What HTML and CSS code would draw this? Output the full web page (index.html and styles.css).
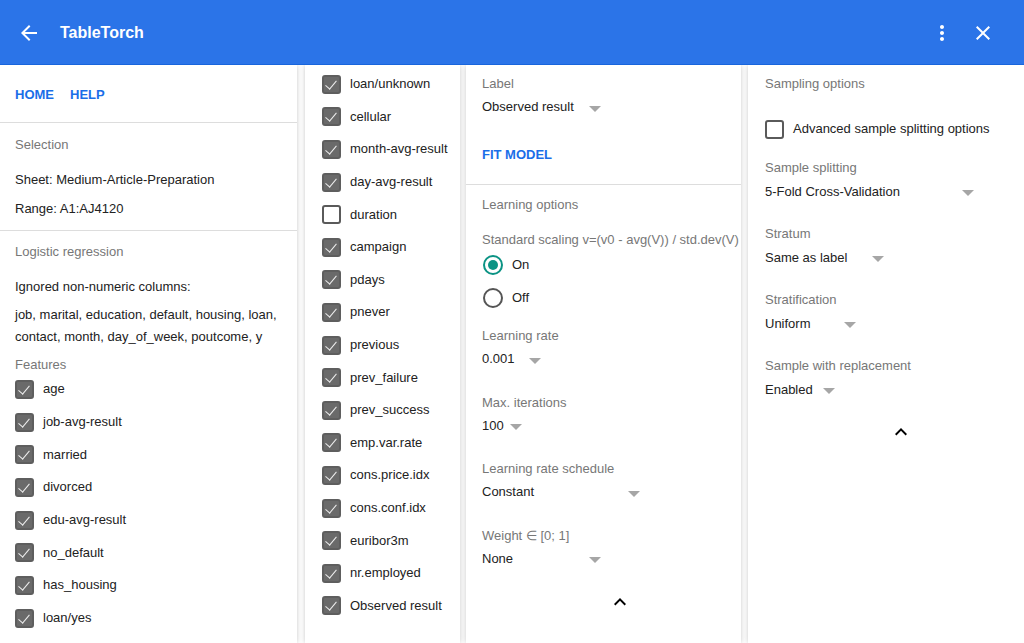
FILE: index.html
```html
<!DOCTYPE html>
<html lang="en">
<head>
<meta charset="utf-8">
<title>TableTorch</title>
<link rel="stylesheet" href="styles.css">
</head>
<body>
<header class="topbar">
  <svg class="icon back" viewBox="0 0 24 24" width="24" height="24"><path fill="#fff" d="M20 11H7.83l5.59-5.59L12 4l-8 8 8 8 1.41-1.41L7.83 13H20v-2z"/></svg>
  <div class="title">TableTorch</div>
  <div class="spacer"></div>
  <svg class="icon more" viewBox="0 0 24 24" width="24" height="24"><path fill="#fff" d="M12 8c1.1 0 2-.9 2-2s-.9-2-2-2-2 .9-2 2 .9 2 2 2zm0 2c-1.1 0-2 .9-2 2s.9 2 2 2 2-.9 2-2-.9-2-2-2zm0 6c-1.1 0-2 .9-2 2s.9 2 2 2 2-.9 2-2-.9-2-2-2z"/></svg>
  <svg class="icon close" viewBox="0 0 24 24" width="24" height="24"><path fill="#fff" d="M19 6.41L17.59 5 12 10.59 6.41 5 5 6.41 10.59 12 5 17.59 6.41 19 12 13.41 17.59 19 19 17.59 13.41 12z"/></svg>
</header>

<main class="columns">
  <section class="col col1">
    <nav class="nav">
      <a class="link">HOME</a>
      <a class="link">HELP</a>
    </nav>
    <div class="block">
      <div class="label">Selection</div>
      <p class="text t1">Sheet: Medium-Article-Preparation</p>
      <p class="text t2">Range: A1:AJ4120</p>
    </div>
    <div class="block last">
      <div class="label">Logistic regression</div>
      <p class="text t1">Ignored non-numeric columns:</p>
      <p class="text multi">job, marital, education, default, housing, loan, contact, month, day_of_week, poutcome, y</p>
      <div class="label features">Features</div>
      <ul class="checks">
        <li class="check on"><span class="box"></span>age</li>
        <li class="check on"><span class="box"></span>job-avg-result</li>
        <li class="check on"><span class="box"></span>married</li>
        <li class="check on"><span class="box"></span>divorced</li>
        <li class="check on"><span class="box"></span>edu-avg-result</li>
        <li class="check on"><span class="box"></span>no_default</li>
        <li class="check on"><span class="box"></span>has_housing</li>
        <li class="check on"><span class="box"></span>loan/yes</li>
      </ul>
    </div>
  </section>

  <section class="col col2">
    <ul class="checks">
      <li class="check on"><span class="box"></span>loan/unknown</li>
      <li class="check on"><span class="box"></span>cellular</li>
      <li class="check on"><span class="box"></span>month-avg-result</li>
      <li class="check on"><span class="box"></span>day-avg-result</li>
      <li class="check"><span class="box"></span>duration</li>
      <li class="check on"><span class="box"></span>campaign</li>
      <li class="check on"><span class="box"></span>pdays</li>
      <li class="check on"><span class="box"></span>pnever</li>
      <li class="check on"><span class="box"></span>previous</li>
      <li class="check on"><span class="box"></span>prev_failure</li>
      <li class="check on"><span class="box"></span>prev_success</li>
      <li class="check on"><span class="box"></span>emp.var.rate</li>
      <li class="check on"><span class="box"></span>cons.price.idx</li>
      <li class="check on"><span class="box"></span>cons.conf.idx</li>
      <li class="check on"><span class="box"></span>euribor3m</li>
      <li class="check on"><span class="box"></span>nr.employed</li>
      <li class="check on"><span class="box"></span>Observed result</li>
    </ul>
  </section>

  <section class="col col3">
    <div class="pad top">
      <div class="label">Label</div>
      <div class="select w119"><span>Observed result</span><span class="caret"></span></div>
      <a class="link fit">FIT MODEL</a>
    </div>
    <div class="pad opts">
      <div class="label">Learning options</div>
      <div class="label scaling">Standard scaling v=(v0 - avg(V)) / std.dev(V)</div>
      <div class="radio on"><span class="ring"></span>On</div>
      <div class="radio"><span class="ring"></span>Off</div>
      <div class="field first">
        <div class="label">Learning rate</div>
        <div class="select w59"><span>0.001</span><span class="caret"></span></div>
      </div>
      <div class="field">
        <div class="label">Max. iterations</div>
        <div class="select w40"><span>100</span><span class="caret"></span></div>
      </div>
      <div class="field">
        <div class="label">Learning rate schedule</div>
        <div class="select w158"><span>Constant</span><span class="caret"></span></div>
      </div>
      <div class="field">
        <div class="label">Weight ∈ [0; 1]</div>
        <div class="select w119"><span>None</span><span class="caret"></span></div>
      </div>
      <svg class="chevron" viewBox="0 0 24 24" width="24" height="24"><path fill="#000" d="M7.41 15.41L12 10.83l4.59 4.58L18 14l-6-6-6 6z"/></svg>
    </div>
  </section>

  <section class="col col4">
    <div class="pad top">
      <div class="label">Sampling options</div>
      <div class="check adv"><span class="box"></span>Advanced sample splitting options</div>
      <div class="field adv-next">
        <div class="label">Sample splitting</div>
        <div class="select w209"><span>5-Fold Cross-Validation</span><span class="caret"></span></div>
      </div>
      <div class="field">
        <div class="label">Stratum</div>
        <div class="select w119"><span>Same as label</span><span class="caret"></span></div>
      </div>
      <div class="field">
        <div class="label">Stratification</div>
        <div class="select w91"><span>Uniform</span><span class="caret"></span></div>
      </div>
      <div class="field">
        <div class="label">Sample with replacement</div>
        <div class="select w70"><span>Enabled</span><span class="caret"></span></div>
      </div>
      <svg class="chevron c4" viewBox="0 0 24 24" width="24" height="24"><path fill="#000" d="M7.41 15.41L12 10.83l4.59 4.58L18 14l-6-6-6 6z"/></svg>
    </div>
  </section>
</main>
</body>
</html>
```

FILE: styles.css
```css
* { box-sizing: border-box; }
html, body { margin: 0; padding: 0; }
body {
  width: 1024px;
  height: 643px;
  overflow: hidden;
  background: #fff;
  font-family: "Liberation Sans", Arial, sans-serif;
  font-size: 13px;
  color: #222;
}
ul { list-style: none; margin: 0; padding: 0; }
p { margin: 0; }

.topbar {
  height: 65px;
  background: #2b74e8;
  border-bottom: 1px solid #1865dc;
  display: flex;
  align-items: center;
  padding: 0 0 0 17px;
  color: #fff;
}
.icon { display: block; flex: none; }
.back { margin-top: 2px; }
.title {
  margin-left: 19px;
  font-size: 16px;
  font-weight: bold;
  margin-top: 2px;
}
.spacer { flex: 1; }
.more { margin-right: 17px; margin-top: 1px; }
.close { margin-right: 29px; margin-top: 1px; }

.columns {
  display: flex;
  height: 578px;
  overflow: hidden;
}
.col {
  flex: none;
  height: 100%;
  background: #fff;
  box-shadow: 0 0 5px rgba(0, 0, 0, 0.22);
  overflow: hidden;
}
.col1 { width: 297px; }
.col2 { width: 155px; margin-left: 8px; padding: 3px 0 0 17px; }
.col3 { width: 275px; margin-left: 6px; }
.col4 { width: 276px; margin-left: 7px; }

.nav {
  height: 58px;
  display: flex;
  align-items: center;
  padding: 2px 15px 0;
  gap: 16px;
  border-bottom: 1px solid #ddd;
}
.link {
  color: #1a6ee8;
  font-weight: bold;
  font-size: 13px;
  line-height: 16px;
  cursor: pointer;
}

.block {
  padding: 14px 15px 13px;
  border-bottom: 1px solid #ddd;
}
.block.last { border-bottom: none; padding-top: 13px; padding-bottom: 0; }
.label {
  color: #777;
  line-height: 16px;
  white-space: nowrap;
}
.text { line-height: 16px; }
.t1 { margin-top: 19px; }
.t2 { margin-top: 13px; }
.multi { line-height: 22px; margin-top: 9px; }
.features { margin-top: 9px; }

.check {
  display: flex;
  align-items: center;
  height: 32.6px;
  line-height: 16px;
  white-space: nowrap;
}
.col1 .check { height: 32.7px; }
.box {
  width: 19px;
  height: 19px;
  border: 2px solid #5a5a5a;
  border-radius: 3px;
  margin-right: 9px;
  flex: none;
  position: relative;
}
.check.on .box {
  background: #6a6a6a;
  border-color: #5e5e5e;
}
.check.on .box::after {
  content: "";
  position: absolute;
  left: 4px;
  top: 1px;
  width: 5px;
  height: 10px;
  border-right: 1.5px solid #eee;
  border-bottom: 1.5px solid #eee;
  transform: rotate(40deg);
}

.pad { padding: 11px 0 0 16px; }
.col4 .pad { padding-left: 17px; }
.col3 .top {
  border-bottom: 1px solid #ddd;
  padding-bottom: 21px;
}
.fit { display: block; margin-top: 32px; }
.col3 .opts { padding-top: 12px; }
.scaling { margin-top: 19px; }

.select {
  display: flex;
  align-items: center;
  justify-content: space-between;
  line-height: 16px;
  margin-top: 7.5px;
  white-space: nowrap;
}
.col3 .select { margin-top: 7px; }
.caret {
  width: 0;
  height: 0;
  border-left: 6px solid transparent;
  border-right: 6px solid transparent;
  border-top: 6px solid #a6a6a6;
  margin-top: 3px;
  flex: none;
}
.w40 { width: 40px; }
.w59 { width: 59px; }
.w70 { width: 70px; }
.w91 { width: 91px; }
.w119 { width: 119px; }
.w158 { width: 158px; }
.w209 { width: 209px; }

.radio {
  display: flex;
  align-items: center;
  height: 33px;
  line-height: 16px;
}
.ring {
  width: 20px;
  height: 20px;
  border: 2px solid #555;
  border-radius: 50%;
  margin: 0 9px 0 1px;
  flex: none;
  position: relative;
}
.radio.on .ring { border-color: #0b9384; }
.radio.on .ring::after {
  content: "";
  position: absolute;
  left: 3px;
  top: 3px;
  width: 10px;
  height: 10px;
  border-radius: 50%;
  background: #0b9384;
}

.field { margin-top: 27.5px; }
.col4 .field { margin-top: 26.5px; }
.col3 .field.first { margin-top: 14px; }
.adv { height: 20px; margin-top: 27px; }
.adv .box { margin-right: 9px; }
.col4 .field.adv-next { margin-top: 21px; }

.chevron {
  display: block;
  margin: 23px 0 0 126px;
}
.chevron.c4 { margin: 22px 0 0 124px; }
```
